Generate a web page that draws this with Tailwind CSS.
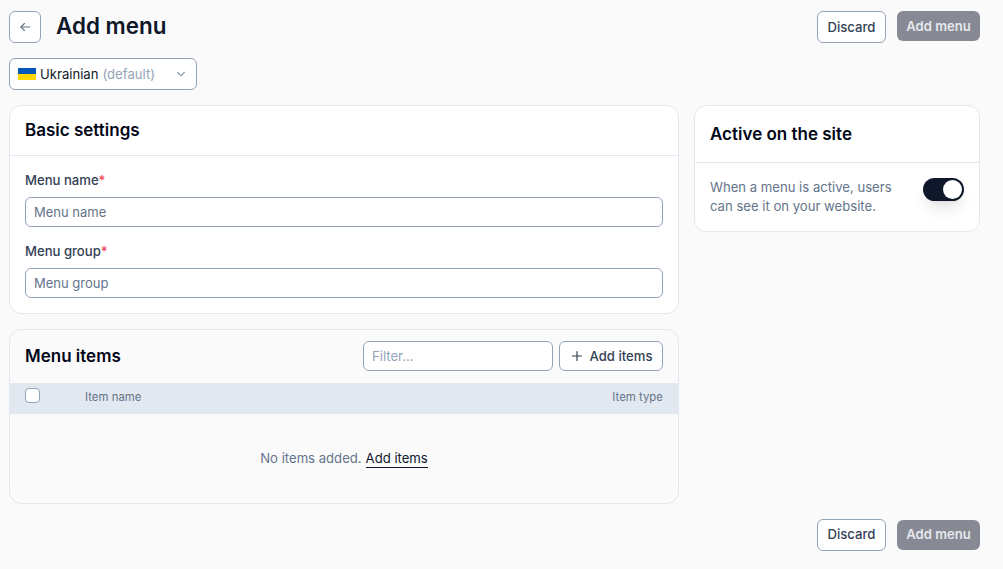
<!DOCTYPE html>
<html lang="en">
<head>
    <meta charset="UTF-8">
    <meta name="viewport" content="width=device-width, initial-scale=1.0">
    <title>Add menu</title>
    <script src="https://cdn.jsdelivr.net/npm/@tailwindcss/browser@4"></script>
</head>
<body class="bg-[#fafafb] font-['Inter',sans-serif] text-[#0f172a]">
    <div class="h-[569px] overflow-hidden pl-[9px] pr-[23px] pt-[11px]">

        <!-- Header -->
        <div class="flex items-center justify-between h-8">
            <div class="flex items-center gap-[15px]">
                <button class="w-8 h-8 flex items-center justify-center bg-white border border-[#94a3b8] rounded-md text-[#64748b]">
                    <svg class="w-[14px] h-[14px]" viewBox="0 0 24 24" fill="none" stroke="currentColor" stroke-width="2" stroke-linecap="round" stroke-linejoin="round"><path d="M20 12H5"/><path d="M11 6l-6 6 6 6"/></svg>
                </button>
                <h1 class="text-[22.4px] leading-8 font-semibold pb-[2px]">Add menu</h1>
            </div>
            <div class="flex gap-[11px]">
                <button class="h-8 w-[69px] pt-[2px] bg-white border border-[#94a3b8] rounded-md text-[13.12px] font-medium text-[#334155]">Discard</button>
                <button class="h-[30px] w-[83px] pt-[2px] bg-[#878a94] rounded-md text-[13.12px] font-semibold text-[#e5e7eb]">Add menu</button>
            </div>
        </div>

        <!-- Language -->
        <div class="mt-[15px] w-[188px] h-8 flex items-center justify-between pl-2 pr-2 pt-[2px] bg-white border border-[#94a3b8] rounded-md text-[13.12px]">
            <div class="flex items-center">
                <span class="flex flex-col w-[18px] h-3 mr-1 shrink-0 -mt-[2px]">
                    <span class="h-1/2 bg-[#0057b7]"></span>
                    <span class="h-1/2 bg-[#ffd700]"></span>
                </span>
                <span class="text-[#0f172a]">Ukrainian</span>
                <span class="text-[#94a3b8] ml-1">(default)</span>
            </div>
            <svg class="w-[14px] h-[14px] -mt-[2px] text-[#94a3b8]" viewBox="0 0 24 24" fill="none" stroke="currentColor" stroke-width="2" stroke-linecap="round" stroke-linejoin="round"><path d="M6 9l6 6 6-6"/></svg>
        </div>

        <div class="mt-[15px] flex items-start gap-[15px]">
            <div class="w-[670px] flex flex-col gap-[15px]">

                <!-- Basic settings -->
                <section class="h-[209px] bg-white border border-[#e2e8f0] rounded-xl">
                    <div class="h-[50px] flex items-center px-[15px] border-b border-[#e2e8f0]">
                        <h2 class="text-[17px] font-semibold text-[#020617]">Basic settings</h2>
                    </div>
                    <div class="px-[15px] pt-[14px]">
                        <label class="block text-[13.12px] leading-5 font-medium text-[#334155]">Menu name<span class="text-[#f43f5e]">*</span></label>
                        <input placeholder="Menu name" class="mt-[7px] block w-full h-[30px] px-2 bg-white border border-[#94a3b8] rounded-md text-[13px] placeholder:text-[#64748b]">
                        <label class="block mt-[14px] text-[13.12px] leading-5 font-medium text-[#334155]">Menu group<span class="text-[#f43f5e]">*</span></label>
                        <input placeholder="Menu group" class="mt-[7px] block w-full h-[30px] px-2 bg-white border border-[#94a3b8] rounded-md text-[13px] placeholder:text-[#64748b]">
                    </div>
                </section>

                <!-- Menu items -->
                <section class="h-[175px] bg-[#fafafb] border border-[#e2e8f0] rounded-xl overflow-hidden">
                    <div class="h-[53px] flex items-center justify-between px-[15px] pb-[2px]">
                        <h2 class="text-[17px] font-semibold text-[#020617] pt-[2px]">Menu items</h2>
                        <div class="flex gap-[6px]">
                            <input placeholder="Filter..." class="w-[190px] h-[30px] px-2 bg-white border border-[#94a3b8] rounded-md text-[13.12px] placeholder:text-[#94a3b8]">
                            <button class="w-[104px] h-[30px] pt-[2px] flex items-center justify-center gap-[7px] bg-white border border-[#94a3b8] rounded-md text-[13.12px] font-medium text-[#334155]">
                                <svg class="w-3 h-3 -mt-[2px] ml-[1px]" viewBox="0 0 12 12" fill="none" stroke="currentColor" stroke-width="1.2" stroke-linecap="round"><path d="M6 1.5v9M1.5 6h9"/></svg>
                                Add items
                            </button>
                        </div>
                    </div>
                    <div class="h-[31px] flex items-center justify-between px-[15px] pb-[2px] bg-[#e2e8f0] text-[11.4px] text-[#64748b]">
                        <div class="flex items-center gap-[45px]">
                            <span class="block w-[15px] h-[15px] -mt-[4px] bg-white border border-[#94a3b8] rounded-[4px]"></span>
                            <span>Item name</span>
                        </div>
                        <span>Item type</span>
                    </div>
                    <div class="h-[89px] flex items-center justify-center text-[13.12px] text-[#64748b]">
                        No items added.
                        <a class="ml-1 text-[#0f172a] border-b border-[#0f172a] leading-[17px]">Add items</a>
                    </div>
                </section>
            </div>

            <!-- Active on the site -->
            <section class="w-[286px] h-[127px] bg-white border border-[#e2e8f0] rounded-xl">
                <div class="h-[57px] flex items-center px-[15px] pt-[2px] border-b border-[#e2e8f0]">
                    <h2 class="text-[17px] font-semibold text-[#020617]">Active on the site</h2>
                </div>
                <div class="flex items-start justify-between pl-[15px] pr-[15px] pt-[15px]">
                    <p class="w-[190px] text-[13.12px] leading-[19px] text-[#64748b]">When a menu is active, users can see it on your website.</p>
                    <span class="w-[41px] h-[23px] flex items-center justify-end pr-[2px] bg-[#0f172a] rounded-full shadow-lg">
                        <span class="w-[19px] h-[19px] bg-white rounded-full"></span>
                    </span>
                </div>
            </section>
        </div>

        <!-- Footer -->
        <div class="mt-[15px] flex justify-end items-center gap-[11px] h-8">
            <button class="h-8 w-[69px] bg-white border border-[#94a3b8] rounded-md text-[13.12px] font-medium text-[#334155]">Discard</button>
            <button class="h-[30px] w-[83px] bg-[#878a94] rounded-md text-[13.12px] font-semibold text-[#e5e7eb]">Add menu</button>
        </div>
    </div>
</body>
</html>
